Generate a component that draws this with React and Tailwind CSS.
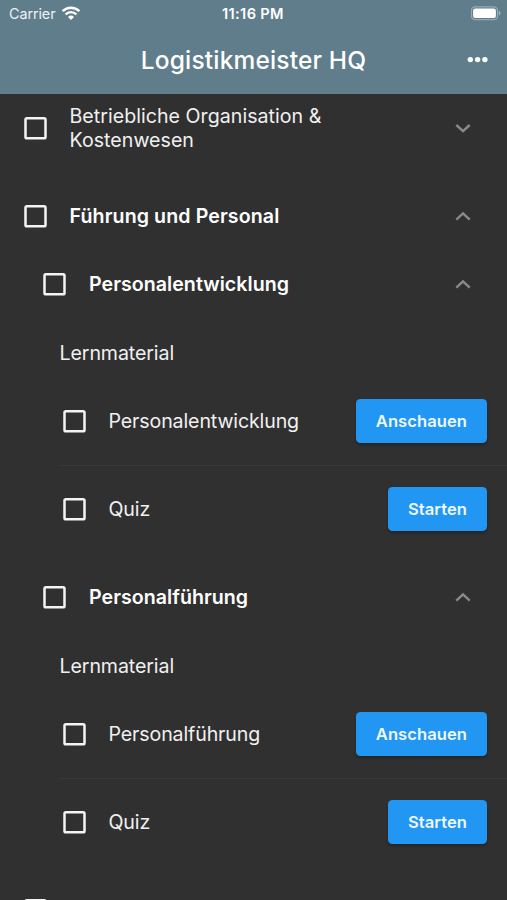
import React from "react";

const chapters = ["Personalentwicklung", "Personalführung"];

function WifiIcon() {
  return (
    <svg className="ml-1.5 h-[15px] w-5" viewBox="0 0 20 15" fill="none">
      <path d="M1.6 5.1a12 12 0 0 1 16.8 0" stroke="white" strokeWidth="2.5" />
      <path d="M4.6 8.4a7.6 7.6 0 0 1 10.8 0" stroke="white" strokeWidth="2.3" />
      <path d="M10 14 7 11a4.3 4.3 0 0 1 6 0Z" fill="white" />
    </svg>
  );
}

function BatteryIcon() {
  return (
    <svg className="h-[15px] w-[31px]" viewBox="0 0 31 15" fill="none">
      <rect x="0.4" y="0.9" width="26.2" height="12.8" rx="3.8" stroke="white" strokeOpacity="0.35" strokeWidth="1.3" />
      <rect x="2.1" y="2.5" width="22.8" height="9.6" rx="2.2" fill="white" />
      <path d="M27.9 5.1c2.2.7 2.2 3.6 0 4.4Z" fill="white" fillOpacity="0.4" />
    </svg>
  );
}

function Checkbox() {
  return (
    <svg
      role="checkbox"
      aria-checked="false"
      className="h-[23px] w-[23px] shrink-0"
      viewBox="0 0 23 23"
      fill="none"
    >
      <rect x="1.5" y="1.3" width="20" height="20" rx="1.4" stroke="#f4f4f4" strokeWidth="2.5" />
    </svg>
  );
}

function Chevron({ open }) {
  return (
    <svg className="h-[9px] w-4 shrink-0" viewBox="0 0 16 9" fill="none" stroke="#8a8a8a" strokeWidth="2.4">
      {open ? <path d="M1.3 7.6 8 1.4 14.7 7.6" /> : <path d="M1.3 1 8 7.2 14.7 1" />}
    </svg>
  );
}

function Material({ label, action }) {
  return (
    <div className="flex h-[68px] items-center pl-[63px] pr-5">
      <Checkbox />
      <span className="ml-[22.5px] flex-1 pt-px text-[19.6px] tracking-[-0.13px]">{label}</span>
      <button className="mb-px h-11 rounded-[4.5px] bg-[#2196f3] px-5 text-[16.6px] font-semibold tracking-[0.04px] text-[#eef7ff] shadow-[0_2px_3px_rgba(0,0,0,0.25)]">
        {action}
      </button>
    </div>
  );
}

function Chapter({ title }) {
  return (
    <section className="mb-5">
      <div className="flex h-[68.5px] items-center pl-[43px] pr-9">
        <Checkbox />
        <span className="ml-[23px] flex-1 text-[19.6px] font-semibold tracking-[0.04px] text-white">{title}</span>
        <Chevron open />
      </div>
      <div className="flex h-[68.5px] items-center pl-[59.5px] text-[19.6px] tracking-[-0.1px]">Lernmaterial</div>
      <Material label={title} action="Anschauen" />
      <div className="my-[9.5px] ml-[59px] h-px bg-[#393939]" />
      <Material label="Quiz" action="Starten" />
    </section>
  );
}

function App() {
  return (
    <div className="h-[900px] w-full overflow-hidden bg-[#303030] font-['Inter',sans-serif] text-[#f0f0f0]">
      <header className="h-[94px] bg-[#607d8c] text-white">
        <div className="grid h-7 grid-cols-3 items-center pl-[7px] pr-[5px]">
          <div className="flex items-center pl-0.5 text-[14.4px] tracking-[-0.1px] text-[#eaf2f6]">
            Carrier
            <WifiIcon />
          </div>
          <span className="pr-[3px] pt-px text-center text-[14.6px] font-semibold tracking-[0.35px]">11:16 PM</span>
          <div className="flex justify-end pb-px">
            <BatteryIcon />
          </div>
        </div>
        <div className="grid h-16 grid-cols-[40px_1fr_40px] items-center px-[18px]">
          <span />
          <h1 className="text-center text-[24.5px] font-medium tracking-[0.16px]">Logistikmeister HQ</h1>
          <svg className="h-5 w-[22px] justify-self-end" viewBox="0 0 22 20" fill="white">
            <circle cx="3.3" cy="9.6" r="2.7" />
            <circle cx="10.6" cy="9.6" r="2.7" />
            <circle cx="17.9" cy="9.6" r="2.7" />
          </svg>
        </div>
      </header>

      <main>
        <div className="mb-5 flex h-[68px] items-center pl-[23.5px] pr-9">
          <Checkbox />
          <span className="ml-[23px] flex-1 pt-px text-[19.6px] leading-[23.4px] tracking-[0.03px]">
            Betriebliche Organisation &amp;
            <br />
            Kostenwesen
          </span>
          <Chevron />
        </div>

        <div className="flex h-[68.5px] items-center pl-[23.5px] pr-9">
          <Checkbox />
          <span className="ml-[23px] flex-1 pt-px text-[19.6px] font-semibold tracking-[0.1px] text-white">
            Führung und Personal
          </span>
          <Chevron open />
        </div>

        {chapters.map((title) => (
          <Chapter key={title} title={title} />
        ))}

        <div className="flex h-[68px] items-center pl-[23.5px]">
          <Checkbox />
        </div>
      </main>
    </div>
  );
}

export default App;
